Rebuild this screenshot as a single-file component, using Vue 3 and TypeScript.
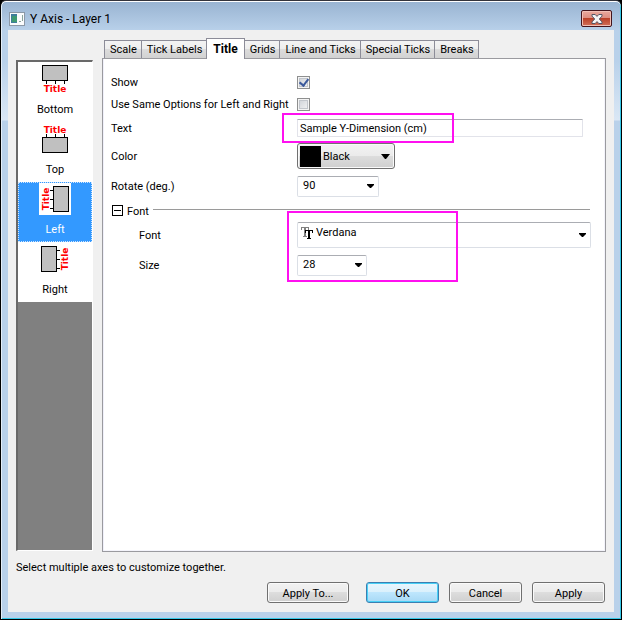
<script setup lang="ts">
import { ref } from 'vue'

type AxisName = 'Bottom' | 'Top' | 'Left' | 'Right'

interface AxisItem {
  name: AxisName
  box: { x: number; y: number; width: number; height: number }
  ticks: string
  text: string
}

const axes: AxisItem[] = [
  {
    name: 'Bottom',
    box: { x: 3.5, y: 2.5, width: 25, height: 15 },
    ticks: 'M7.5 18v3M16.5 18v3M25.5 18v3',
    text: 'translate(16 29)',
  },
  {
    name: 'Top',
    box: { x: 3.5, y: 14.5, width: 25, height: 15 },
    ticks: 'M7.5 14v-3M16.5 14v-3M25.5 14v-3',
    text: 'translate(16 10)',
  },
  {
    name: 'Left',
    box: { x: 14.5, y: 3.5, width: 15, height: 25 },
    ticks: 'M14 7.5h-3M14 16.5h-3M14 25.5h-3',
    text: 'translate(10 16) rotate(-90)',
  },
  {
    name: 'Right',
    box: { x: 2.5, y: 3.5, width: 15, height: 25 },
    ticks: 'M18 7.5h3M18 16.5h3M18 25.5h3',
    text: 'translate(29 16) rotate(-90)',
  },
]

const tabs = ['Scale', 'Tick Labels', 'Title', 'Grids', 'Line and Ticks', 'Special Ticks', 'Breaks']

const activeTab = ref('Title')
const selected = ref<AxisName[]>(['Left'])
const show = ref(true)
const sameOptions = ref(false)
const titleText = ref('Sample Y-Dimension (cm)')
const color = ref('Black')
const rotation = ref('90')
const fontOpen = ref(true)
const font = ref('Verdana')
const size = ref('28')

function toggleAxis(name: AxisName, event: MouseEvent): void {
  if (!event.ctrlKey) {
    selected.value = [name]
    return
  }
  selected.value = selected.value.includes(name)
    ? selected.value.filter((n) => n !== name)
    : [...selected.value, name]
}
</script>

<template>
  <div class="window">
    <header class="titlebar">
      <svg class="app-icon" width="16" height="14" viewBox="0 0 16 14" aria-hidden="true">
        <rect x="0.5" y="0.5" width="15" height="13" fill="#fbfcfd" stroke="#8c98a6" />
        <rect x="2" y="2" width="6" height="9" fill="#3f7d9c" />
        <rect x="3" y="4" width="5" height="6" fill="#3f9a72" />
        <path d="M10 9h2v1h-2zM13 3h1v6h-1z" fill="#8aa49c" />
      </svg>
      <h1>Y Axis - Layer 1</h1>
      <button class="close" type="button" aria-label="Close">
        <svg width="12" height="10" viewBox="0 0 12 10" aria-hidden="true">
          <path
            d="M1 .5h3.2L6 2.4 7.800 .5H11v1.600L8.300 5 11 7.900v1.600H7.800L6 7.600 4.200 9.500H1V7.900L3.700 5 1 2.100z"
            fill="#f4f4f6"
            stroke="#535666"
          />
        </svg>
      </button>
    </header>

    <main class="client">
      <div class="body">
        <nav class="axis-list" aria-label="Axes">
          <button
            v-for="axis in axes"
            :key="axis.name"
            type="button"
            class="axis"
            :class="{ selected: selected.includes(axis.name) }"
            :aria-pressed="selected.includes(axis.name)"
            @click="toggleAxis(axis.name, $event)"
          >
            <svg width="32" height="32" viewBox="0 0 32 32" aria-hidden="true">
              <rect v-bind="axis.box" fill="#c0c0c0" stroke="#000" />
              <path :d="axis.ticks" stroke="#000" />
              <text class="axis-title" :transform="axis.text" text-anchor="middle">Title</text>
            </svg>
            <span>{{ axis.name }}</span>
          </button>
        </nav>

        <section class="pages">
          <div class="tabs" role="tablist">
            <button
              v-for="tab in tabs"
              :key="tab"
              type="button"
              role="tab"
              class="tab"
              :class="{ active: tab === activeTab }"
              :aria-selected="tab === activeTab"
              @click="activeTab = tab"
            >
              {{ tab }}
            </button>
          </div>

          <form class="panel" @submit.prevent>
            <div class="row short">
              <label for="show">Show</label>
              <input id="show" v-model="show" class="check" type="checkbox" />
            </div>
            <div class="row short">
              <label for="same">Use Same Options for Left and Right</label>
              <input id="same" v-model="sameOptions" class="check" type="checkbox" />
            </div>
            <div class="row text-row">
              <label for="text">Text</label>
              <input id="text" v-model="titleText" class="text-input" type="text" />
              <span class="mark mark-text" />
            </div>
            <div class="row">
              <label for="color">Color</label>
              <div class="combo color">
                <select id="color" v-model="color">
                  <option>Black</option>
                  <option>Red</option>
                  <option>Blue</option>
                </select>
                <span class="swatch" :style="{ background: color.toLowerCase() }" />
                <svg class="arrow" width="9" height="5" viewBox="0 0 9 5" aria-hidden="true">
                  <path d="M0 0h9L5 5H4z" />
                </svg>
              </div>
            </div>
            <div class="row">
              <label for="rotate">Rotate (deg.)</label>
              <div class="combo rotate">
                <select id="rotate" v-model="rotation">
                  <option>0</option>
                  <option>90</option>
                  <option>180</option>
                </select>
                <svg class="arrow" width="7" height="4" viewBox="0 0 7 4" aria-hidden="true">
                  <path d="M0 0h7v1L4 4H3L0 1z" />
                </svg>
              </div>
            </div>

            <div class="group-head">
              <button
                type="button"
                class="expander"
                aria-label="Font options"
                :aria-expanded="fontOpen"
                @click="fontOpen = !fontOpen"
              >
                <svg width="11" height="11" viewBox="0 0 11 11" aria-hidden="true">
                  <rect x="0.5" y="0.5" width="10" height="10" fill="#fff" stroke="#000" />
                  <path :d="fontOpen ? 'M2 5.5h7' : 'M2 5.5h7M5.5 2v7'" stroke="#000" />
                </svg>
              </button>
              <span class="group-name">Font</span>
              <span class="rule" />
            </div>

            <div v-show="fontOpen" class="group">
              <div class="row nested">
                <label for="font">Font</label>
                <div class="combo font">
                  <select id="font" v-model="font">
                    <option>Verdana</option>
                    <option>Arial</option>
                    <option>Tahoma</option>
                  </select>
                  <svg class="tt" width="12" height="13" viewBox="0 0 12 13" aria-hidden="true">
                    <path d="M0 0h8v3h-1V1H5v8h1v1H2V9h1V1H1v2H0z" fill="#808080" />
                    <path d="M4 3h8v3h-1V4H9v7h1v1H6v-1h1V4H5v2H4z" fill="#000" />
                  </svg>
                  <svg class="arrow" width="7" height="4" viewBox="0 0 7 4" aria-hidden="true">
                    <path d="M0 0h7v1L4 4H3L0 1z" />
                  </svg>
                </div>
              </div>
              <div class="row nested">
                <label for="size">Size</label>
                <div class="combo size">
                  <select id="size" v-model="size">
                    <option>18</option>
                    <option>22</option>
                    <option>28</option>
                  </select>
                  <svg class="arrow" width="7" height="4" viewBox="0 0 7 4" aria-hidden="true">
                    <path d="M0 0h7v1L4 4H3L0 1z" />
                  </svg>
                </div>
              </div>
              <span class="mark mark-font" />
            </div>
          </form>
        </section>
      </div>

      <p class="hint">Select multiple axes to customize together.</p>

      <footer class="actions">
        <button type="button" class="push wide">Apply To...</button>
        <button type="button" class="push primary">OK</button>
        <button type="button" class="push">Cancel</button>
        <button type="button" class="push">Apply</button>
      </footer>
    </main>
  </div>
</template>

<style>
body {
  margin: 0;
  background: #000;
}
</style>

<style scoped>
* {
  box-sizing: border-box;
}

.window {
  display: flex;
  flex-direction: column;
  min-height: 100vh;
  padding: 0 6px 6px;
  border: 1px solid #000;
  border-top-color: #33333b;
  border-radius: 6px 6px 0 0;
  background: linear-gradient(#98b3d1 0, #b9d1ea 30px, #b9d1ea 60px, #dae7f5 119px, #b9d1ea 120px);
  box-shadow: inset 0 1px #fff, inset 1px 0 #e4eef8, inset -1px -1px #35c8e8;
  font-family: Roboto, 'Liberation Sans', sans-serif;
  font-size: 11px;
  line-height: 14px;
  color: #000;
}

button,
input,
select {
  margin: 0;
  font: inherit;
  color: inherit;
}

.titlebar {
  display: flex;
  align-items: center;
  gap: 5px;
  height: 29px;
  padding: 6px 3px 0 2px;
}

.titlebar h1 {
  flex: 1;
  margin: 0;
  font-size: 12px;
  font-weight: 400;
  line-height: 16px;
}

.close {
  display: flex;
  align-items: center;
  justify-content: center;
  width: 31px;
  height: 17px;
  padding: 0;
  border: 1px solid #43141c;
  border-radius: 2px;
  background: linear-gradient(#e9a99e, #dc8b7e 50%, #bb4128 50%, #d2705a);
  box-shadow: inset 0 0 0 1px #f0bfb5;
}

.client {
  flex: 1;
  display: flex;
  flex-direction: column;
  margin: 0 1px 1px;
  padding: 10px 8px 9px;
  background: #f0f0f0;
}

.body {
  flex: 1;
  display: flex;
  gap: 9px;
}

.axis-list {
  width: 77px;
  margin: 20px 0 1px;
  border: 1px solid #fff;
  border-top: 2px solid #696969;
  border-left: 2px solid #696969;
  background: #808080;
}

.axis {
  display: flex;
  flex-direction: column;
  align-items: center;
  gap: 8px;
  width: 100%;
  height: 60px;
  padding: 0;
  border: 1px solid #fff;
  background: #fff;
}

.axis svg {
  flex: none;
  background: #fff;
}

.axis.selected {
  border: 1px dotted #cfe6ff;
  background: #3399ff;
  color: #fff;
}

.axis-title {
  font-family: 'DejaVu Sans', sans-serif;
  font-size: 9px;
  font-weight: 700;
  fill: #f00;
}

.pages {
  flex: 1;
  display: flex;
  flex-direction: column;
  min-width: 0;
}

.tabs {
  display: flex;
  align-items: flex-end;
  height: 19px;
  margin-top: -1px;
  padding-left: 2px;
}

.tab {
  height: 18px;
  padding: 0 4px 0 5px;
  border: 1px solid #8c8c98;
  border-width: 1px 1px 0 0;
  background: linear-gradient(#f3f3f3, #ededed 50%, #dcdcdc 50%, #d2d2d2);
  white-space: nowrap;
}

.tab:first-child {
  border-left-width: 1px;
}

.tab.active {
  position: relative;
  height: 21px;
  margin: 0 0 -1px -1px;
  padding: 0 6px;
  border-left-width: 1px;
  background: #fff;
  font-size: 12px;
  font-weight: 700;
}

.panel {
  flex: 1;
  padding: 12px 14px 12px 8px;
  border: 1px solid #9a9a9f;
  background: #fff;
  box-shadow: inset 1px 0 #f0f0fa, inset -1px -1px #f4f4fb;
}

.row {
  position: relative;
  display: grid;
  grid-template-columns: 186px minmax(0, 1fr);
  align-items: center;
  height: 30px;
}

.row label {
  padding-top: 2px;
  white-space: nowrap;
}

.row.short {
  height: 22px;
}

.row.text-row {
  height: 26px;
}

.nested label {
  padding-left: 28px;
}

.check {
  appearance: none;
  display: grid;
  place-items: center;
  width: 13px;
  height: 13px;
  border: 1px solid #8e8f8f;
  background: linear-gradient(135deg, #cbcfd5, #f6f6f6);
  box-shadow: inset 0 0 0 1px #f4f4f4, inset 0 0 0 2px #c2c6cc;
}

.check:checked::after {
  content: '';
  width: 4px;
  height: 7px;
  margin-bottom: 2px;
  border: solid #3c5a9c;
  border-width: 0 2px 2px 0;
  transform: rotate(38deg);
}

.text-input {
  height: 18px;
  margin-right: 8px;
  padding: 0 2px;
  border: 1px solid #e2e3ea;
  border-top-color: #abadb3;
  border-radius: 1px;
  background: #fff;
}

.combo {
  display: grid;
  align-items: center;
}

.combo > * {
  grid-area: 1 / 1;
}

.combo select {
  appearance: none;
  width: 100%;
  height: 21px;
  padding: 0 5px;
  border: 1px solid #dbdfe6;
  border-top-color: #abadb3;
  border-radius: 2px;
  background: #fff;
}

.arrow {
  justify-self: end;
  margin-right: 5px;
  pointer-events: none;
}

.combo.color {
  width: 98px;
}

.combo.color select {
  height: 26px;
  padding: 2px 5px 0 25px;
  border: 1px solid #707070;
  border-radius: 3px;
  background: linear-gradient(#f2f2f2, #ebebeb 50%, #dddddd 50%, #cfcfcf);
  box-shadow: inset 0 0 0 1px #fafafa;
}

.swatch {
  width: 21px;
  height: 21px;
  margin-left: 3px;
  pointer-events: none;
}

.combo.rotate {
  width: 82px;
}

.combo.size {
  width: 70px;
}

.combo.font select {
  height: 26px;
  padding: 0 18px 5px;
}

.tt {
  margin: 0 0 4px 4px;
  pointer-events: none;
}

.group-head {
  display: flex;
  align-items: center;
  gap: 4px;
  height: 19px;
  padding-right: 1px;
}

.group-name {
  padding-top: 2px;
}

.expander {
  display: flex;
  padding: 0;
  margin-left: 1px;
  border: 0;
  background: none;
}

.rule {
  flex: 1;
  height: 1px;
  margin-bottom: 2px;
  background: #9a9a9a;
}

.group {
  position: relative;
}

.mark {
  position: absolute;
  border: 2px solid #ff10f0;
  pointer-events: none;
}

.mark-text {
  top: -2px;
  left: 171px;
  width: 172px;
  height: 30px;
}

.mark-font {
  top: -9px;
  left: 176px;
  width: 171px;
  height: 71px;
}

.hint {
  margin: 9px 0 7px;
}

.actions {
  display: flex;
  justify-content: flex-end;
  gap: 10px;
  padding-right: 1px;
}

.push {
  width: 73px;
  height: 21px;
  padding: 2px 0 0;
  border: 1px solid #707070;
  border-radius: 3px;
  background: linear-gradient(#f2f2f2, #ebebeb 50%, #dddddd 50%, #cfcfcf);
  box-shadow: inset 0 0 0 1px #fafafa;
}

.push.wide {
  width: 82px;
  margin-right: 7px;
}

.push.primary {
  border-color: #3c7fb1;
  background: linear-gradient(#eaf6fd, #d9f0fc 50%, #bee6fd 50%, #a7d9f5);
  box-shadow: inset 0 0 0 1px #48d0f6;
}
</style>
